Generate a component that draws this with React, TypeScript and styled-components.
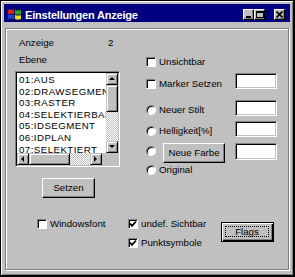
import React from "react";
import styled, { createGlobalStyle } from "styled-components";

const GlobalStyle = createGlobalStyle`
  html, body { margin: 0; padding: 0; background: #c0c0c0; }
  body {
    font-family: "Liberation Sans", Arial, sans-serif;
    font-size: 9.7px;
    color: #000;
  }
`;

const Window = styled.div`
  box-sizing: border-box;
  width: 295px;
  height: 277px;
  display: flex;
  flex-direction: column;
  background: #c0c0c0;
  border-style: solid;
  border-color: #000;
  border-width: 1px 2px 2px 1px;
  box-shadow: inset 1px 1px 0 #fff, inset -1px -1px 0 #808080;
  padding: 3px 3px 1px 3px;
`;

const TitleBar = styled.div`
  height: 18px;
  flex: 0 0 18px;
  display: flex;
  align-items: flex-start;
  background: #000080;
  overflow: hidden;
`;

const AppIcon = styled.svg`
  margin: 4px 3px 0 3px;
  flex: 0 0 auto;
`;

const TitleText = styled.span`
  color: #fff;
  font-weight: bold;
  font-size: 11px;
  letter-spacing: -0.2px;
  line-height: 22px;
  height: 18px;
  white-space: nowrap;
`;

const TitleButtons = styled.div`
  margin: 5px 5px 0 auto;
  display: flex;
`;

const CaptionButton = styled.span<{ $gap?: number }>`
  box-sizing: border-box;
  width: 11px;
  height: 11px;
  margin-left: ${(p) => p.$gap ?? 0}px;
  display: flex;
  align-items: center;
  justify-content: center;
  background: #c0c0c0;
  border: 1px solid;
  border-color: #fff #000 #000 #fff;
  box-shadow: inset -1px -1px 0 #808080;
`;

const Body = styled.div`
  flex: 1;
  display: flex;
  padding: 6px 1px 4px 1px;
`;

const Frame = styled.div`
  box-sizing: border-box;
  flex: 1;
  display: flex;
  flex-direction: column;
  border: 1px solid #808080;
  box-shadow: inset 1px 1px 0 #fff, 1px 1px 0 #fff;
  padding: 8px 0 0 9px;
`;

const Text = styled.span<{ $indent?: number; $w?: number }>`
  display: inline-block;
  line-height: 12px;
  white-space: nowrap;
  margin-left: ${(p) => p.$indent ?? 0}px;
  ${(p) => (p.$w ? `width: ${p.$w}px;` : "")}
`;

const TopRow = styled.div`
  display: flex;
  height: 12px;
`;

const Main = styled.div`
  display: flex;
  margin-top: 5px;
`;

const LeftCol = styled.div`
  width: 131px;
  display: flex;
  flex-direction: column;
  align-items: flex-start;
`;

const RightCol = styled.div`
  width: 131px;
  display: flex;
  flex-direction: column;
`;

const ListBox = styled.div`
  box-sizing: border-box;
  width: 105px;
  height: 96px;
  margin-top: 5px;
  display: flex;
  flex-direction: column;
  background: #fff;
  border: 1px solid;
  border-color: #808080 #fff #fff #808080;
  box-shadow: inset 1px 1px 0 #000, inset -1px -1px 0 #c0c0c0;
  padding: 1px;
`;

const ListTop = styled.div`
  flex: 1;
  display: flex;
  min-height: 0;
`;

const Items = styled.div`
  flex: 1;
  overflow: hidden;
  padding: 1px 0 0 2px;
  line-height: 11.6px;
  letter-spacing: 0.45px;
  white-space: nowrap;
  min-width: 0;
`;

const ScrollV = styled.div`
  width: 12px;
  display: flex;
  flex-direction: column;
`;

const ListBottom = styled.div`
  height: 12px;
  flex: 0 0 12px;
  display: flex;
`;

const ScrollH = styled.div`
  flex: 1;
  display: flex;
`;

const Corner = styled.div`
  width: 16px;
  background: #c0c0c0;
`;

const Track = styled.div`
  flex: 1;
  background: repeating-conic-gradient(#c0c0c0 0 25%, #fff 0 50%) 0 0 / 2px 2px;
`;

const Raised = styled.div<{ $w?: number; $h?: number }>`
  box-sizing: border-box;
  ${(p) => (p.$w ? `width: ${p.$w}px; flex: 0 0 ${p.$w}px;` : "")}
  ${(p) => (p.$h ? `height: ${p.$h}px; flex: 0 0 ${p.$h}px;` : "")}
  display: flex;
  align-items: center;
  justify-content: center;
  background: #c0c0c0;
  border: 1px solid;
  border-color: #c0c0c0 #000 #000 #c0c0c0;
  box-shadow: inset 1px 1px 0 #fff, inset -1px -1px 0 #808080;
`;

const Button = styled.button<{ $w: number; $top?: number; $left?: number; $default?: boolean }>`
  box-sizing: border-box;
  width: ${(p) => p.$w}px;
  height: 20px;
  flex: 0 0 auto;
  margin: ${(p) => p.$top ?? 0}px 0 0 ${(p) => p.$left ?? 0}px;
  padding: 0;
  display: flex;
  align-items: stretch;
  justify-content: stretch;
  font: inherit;
  color: #000;
  background: #c0c0c0;
  border: 1px solid;
  border-color: ${(p) => (p.$default ? "#000" : "#fff #000 #000 #fff")};
  box-shadow: ${(p) =>
    p.$default
      ? "inset 1px 1px 0 #fff, inset -1px -1px 0 #000, inset -2px -2px 0 #808080"
      : "inset -1px -1px 0 #808080"};
`;

const ButtonFace = styled.span<{ $focus?: boolean }>`
  flex: 1;
  display: flex;
  align-items: center;
  justify-content: center;
  margin: ${(p) => (p.$focus ? "3px 4px 4px 3px" : "0")};
  border: ${(p) => (p.$focus ? "1px dotted #000" : "none")};
  line-height: 12px;
`;

const OptionRow = styled.div<{ $h: number }>`
  display: flex;
  align-items: center;
  height: ${(p) => p.$h}px;
`;

const TextBox = styled.div<{ $raise?: number; $h?: number }>`
  box-sizing: border-box;
  width: 42px;
  height: ${(p) => p.$h ?? 16}px;
  margin-left: auto;
  margin-bottom: ${(p) => (p.$raise ?? 0) * 2}px;
  background: #fff;
  border: 1px solid;
  border-color: #808080 #fff #fff #808080;
  box-shadow: inset 1px 1px 0 #000, inset -1px -1px 0 #c0c0c0;
`;

const CheckBox = styled.span`
  box-sizing: border-box;
  width: 10px;
  height: 10px;
  flex: 0 0 10px;
  margin-right: 3px;
  display: flex;
  align-items: center;
  justify-content: center;
  background: #fff;
  border: 1px solid;
  border-color: #808080 #fff #fff #808080;
  box-shadow: inset 1px 1px 0 #000;
`;

const RadioDot = styled.span`
  box-sizing: border-box;
  width: 10px;
  height: 10px;
  flex: 0 0 10px;
  margin-right: 3px;
  border-radius: 50%;
  background: #fff;
  border: 1px solid;
  border-color: #808080 #fff #fff #808080;
  box-shadow: inset 1px 1px 0 #000;
`;

const Bottom = styled.div`
  display: grid;
  grid-template-columns: 91px 93px 53px;
  align-items: start;
  margin-top: 18px;
  padding-left: 22px;
`;

const CheckLine = styled.div`
  display: flex;
  align-items: center;
  height: 16px;
`;

const Stack = styled.div`
  display: flex;
  flex-direction: column;
  gap: 3px;
`;

const Tick = () => (
  <svg width="8" height="8" viewBox="0 0 8 8">
    <polyline points="1,3.5 3,5.8 7,1.5" fill="none" stroke="#000" strokeWidth="1.8" />
  </svg>
);

const Check = ({ label, checked }: { label: string; checked?: boolean }) => (
  <CheckLine>
    <CheckBox>{checked ? <Tick /> : null}</CheckBox>
    <Text>{label}</Text>
  </CheckLine>
);

const Arrow = ({ dir }: { dir: "up" | "down" | "left" | "right" }) => {
  const pts = {
    up: "1,5 4,2 7,5",
    down: "1,2 4,5 7,2",
    left: "5,1 2,4 5,7",
    right: "2,1 5,4 2,7",
  }[dir];
  return (
    <svg width="8" height="8" viewBox="0 0 8 8">
      <polygon points={pts} fill="#000" />
    </svg>
  );
};

const items = [
  "01:AUS",
  "02:DRAWSEGMENT",
  "03:RASTER",
  "04:SELEKTIERBAR",
  "05:IDSEGMENT",
  "06:IDPLAN",
  "07:SELEKTIERT",
];

export default function App() {
  return (
    <>
      <GlobalStyle />
      <Window>
        <TitleBar>
          <AppIcon width="15" height="12" viewBox="0 0 15 12">
            <rect x="0" y="1" width="15" height="11" fill="#101040" />
            <path d="M1 2 Q3 1 7 2 V6 Q3 5 1 6 Z" fill="#e02020" />
            <path d="M8 2 Q11 3 14 2 V6 Q11 7 8 6 Z" fill="#20b020" />
            <path d="M1 7 Q3 6 7 7 V11 Q3 10 1 11 Z" fill="#2040e0" />
            <path d="M8 7 Q11 8 14 7 V11 Q11 12 8 11 Z" fill="#e8e020" />
          </AppIcon>
          <TitleText>Einstellungen Anzeige</TitleText>
          <TitleButtons>
            <CaptionButton>
              <svg width="7" height="7" viewBox="0 0 7 7">
                <rect x="1" y="5" width="5" height="2" fill="#000" />
              </svg>
            </CaptionButton>
            <CaptionButton>
              <svg width="8" height="7" viewBox="0 0 8 7">
                <rect x="0.5" y="0.5" width="7" height="6" fill="none" stroke="#000" />
                <rect x="0" y="0" width="8" height="2" fill="#000" />
              </svg>
            </CaptionButton>
            <CaptionButton $gap={9}>
              <svg width="7" height="7" viewBox="0 0 7 7">
                <path d="M0.5 0.5 L6.5 6.5 M6.5 0.5 L0.5 6.5" stroke="#000" strokeWidth="1.6" />
              </svg>
            </CaptionButton>
          </TitleButtons>
        </TitleBar>
        <Body>
          <Frame>
            <TopRow>
              <Text $indent={4} $w={89}>Anzeige</Text>
              <Text>2</Text>
            </TopRow>
            <Main>
              <LeftCol>
                <Text $indent={4}>Ebene</Text>
                <ListBox>
                  <ListTop>
                    <Items>
                      {items.map((it) => (
                        <div key={it}>{it}</div>
                      ))}
                    </Items>
                    <ScrollV>
                      <Raised $h={12}><Arrow dir="up" /></Raised>
                      <Raised $h={27} />
                      <Track />
                      <Raised $h={12}><Arrow dir="down" /></Raised>
                    </ScrollV>
                  </ListTop>
                  <ListBottom>
                    <ScrollH>
                      <Raised $w={12}><Arrow dir="left" /></Raised>
                      <Raised $w={41} />
                      <Track />
                      <Raised $w={12}><Arrow dir="right" /></Raised>
                    </ScrollH>
                    <Corner />
                  </ListBottom>
                </ListBox>
                <Button $w={53} $top={11} $left={27}>
                  <ButtonFace>Setzen</ButtonFace>
                </Button>
              </LeftCol>
              <RightCol>
                <OptionRow $h={16}>
                  <CheckBox />
                  <Text>Unsichtbar</Text>
                </OptionRow>
                <OptionRow $h={28}>
                  <CheckBox />
                  <Text>Marker Setzen</Text>
                  <TextBox $raise={3} />
                </OptionRow>
                <OptionRow $h={24}>
                  <RadioDot />
                  <Text>Neuer Stilt</Text>
                  <TextBox $raise={2} />
                </OptionRow>
                <OptionRow $h={18}>
                  <RadioDot />
                  <Text>Helligkeit[%]</Text>
                  <TextBox $raise={2} />
                </OptionRow>
                <OptionRow $h={22}>
                  <RadioDot />
                  <Button $w={62} $top={4} $left={4}>
                    <ButtonFace>Neue Farbe</ButtonFace>
                  </Button>
                  <TextBox $h={17} />
                </OptionRow>
                <OptionRow $h={15}>
                  <RadioDot />
                  <Text>Original</Text>
                </OptionRow>
              </RightCol>
            </Main>
            <Bottom>
              <Check label="Windowsfont" />
              <Stack>
                <Check label="undef. Sichtbar" checked />
                <Check label="Punktsymbole" checked />
              </Stack>
              <Button $w={53} $top={6} $default>
                <ButtonFace $focus>Flags</ButtonFace>
              </Button>
            </Bottom>
          </Frame>
        </Body>
      </Window>
    </>
  );
}
